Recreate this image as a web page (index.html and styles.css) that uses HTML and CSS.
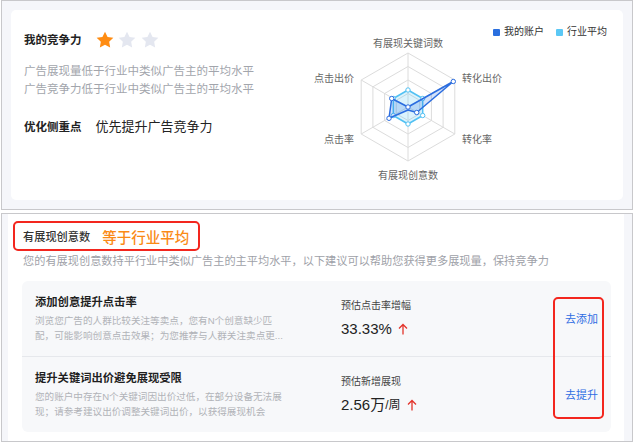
FILE: index.html
```html
<!DOCTYPE html>
<html lang="zh-CN">
<head>
    <meta charset="UTF-8">
    <title>竞争力分析</title>
    <link rel="stylesheet" href="styles.css">
</head>
<body>

<div class="panel panel-top">
    <div class="card compete">
        <div class="info">
            <div class="head">
                <span class="title">我的竞争力</span>
                <span class="stars">
                    <svg class="star on" viewBox="0 0 24 24"><polygon points="12 2 15.09 8.26 22 9.27 17 14.14 18.18 21.02 12 17.77 5.82 21.02 7 14.14 2 9.27 8.91 8.26"/></svg>
                    <svg class="star" viewBox="0 0 24 24"><polygon points="12 2 15.09 8.26 22 9.27 17 14.14 18.18 21.02 12 17.77 5.82 21.02 7 14.14 2 9.27 8.91 8.26"/></svg>
                    <svg class="star" viewBox="0 0 24 24"><polygon points="12 2 15.09 8.26 22 9.27 17 14.14 18.18 21.02 12 17.77 5.82 21.02 7 14.14 2 9.27 8.91 8.26"/></svg>
                </span>
            </div>
            <p class="desc">广告展现量低于行业中类似广告主的平均水平<br>广告竞争力低于行业中类似广告主的平均水平</p>
            <div class="focus">
                <span class="focus-label">优化侧重点</span>
                <span class="focus-value">优先提升广告竞争力</span>
            </div>
        </div>

        <svg class="radar" viewBox="300 30 190 155" width="190" height="155">
            <g class="grid">
                <polygon points="408,53 454.8,80 454.8,134 408,161 361.2,134 361.2,80"/>
                <polygon points="408,66.5 443.1,86.8 443.1,127.3 408,147.5 372.9,127.3 372.9,86.8"/>
                <polygon points="408,80 431.4,93.5 431.4,120.5 408,134 384.6,120.5 384.6,93.5"/>
                <polygon points="408,93.5 419.7,100.3 419.7,113.8 408,120.5 396.3,113.8 396.3,100.3"/>
                <path d="M408 107V53M408 107L454.8 80M408 107L454.8 134M408 107V161M408 107L361.2 134M408 107L361.2 80"/>
            </g>
            <g class="series avg">
                <polygon points="408,90 422.7,98.5 422.7,115.5 408,124 393.3,115.5 393.3,98.5"/>
                <circle cx="408" cy="90" r="2.2"/><circle cx="422.7" cy="98.5" r="2.2"/>
                <circle cx="422.7" cy="115.5" r="2.2"/><circle cx="408" cy="124" r="2.2"/>
                <circle cx="393.3" cy="115.5" r="2.2"/><circle cx="393.3" cy="98.5" r="2.2"/>
            </g>
            <g class="series mine">
                <polygon points="408,107 453.3,81.5 416.7,112.5 408,110 389,118.3 391.7,98.5"/>
                <circle cx="408" cy="107" r="2.2"/><circle cx="453.3" cy="81.5" r="2.2"/>
                <circle cx="416.7" cy="112.5" r="2.2"/><circle cx="389" cy="118.3" r="2.2"/>
                <circle cx="391.7" cy="98.5" r="2.2"/>
            </g>
            <g class="axis">
                <text x="408" y="43" text-anchor="middle">有展现关键词数</text>
                <text x="462" y="78">转化出价</text>
                <text x="462" y="139">转化率</text>
                <text x="408" y="175" text-anchor="middle">有展现创意数</text>
                <text x="354" y="139" text-anchor="end">点击率</text>
                <text x="354" y="78" text-anchor="end">点击出价</text>
            </g>
        </svg>

        <div class="legend">
            <span class="legend-item"><i class="dot dot-mine"></i>我的账户</span>
            <span class="legend-item"><i class="dot dot-avg"></i>行业平均</span>
        </div>
    </div>
</div>

<div class="panel panel-bottom">
    <div class="card advice">
        <div class="metric-head">
            <span class="metric-name">有展现创意数</span>
            <span class="metric-level">等于行业平均</span>
        </div>
        <p class="summary">您的有展现创意数持平行业中类似广告主的主平均水平，以下建议可以帮助您获得更多展现量，保持竞争力</p>

        <div class="suggestions">
            <div class="item">
                <div class="item-main">
                    <div class="item-title">添加创意提升点击率</div>
                    <p class="item-desc">浏览您广告的人群比较关注等卖点，您有N个创意缺少匹配，可能影响创意点击效果；为您推荐与人群关注卖点更...</p>
                </div>
                <div class="estimate">
                    <div class="est-label">预估点击率增幅</div>
                    <div class="est-value">33.33%
                        <svg class="up" viewBox="0 0 10 12"><path d="M5 1.5V11.5M1 5.5L5 1.5L9 5.5"/></svg>
                    </div>
                </div>
                <a class="action">去添加</a>
            </div>
            <div class="item">
                <div class="item-main">
                    <div class="item-title">提升关键词出价避免展现受限</div>
                    <p class="item-desc">您的账户中存在N个关键词因出价过低，在部分设备无法展现；请参考建议出价调整关键词出价，以获得展现机会</p>
                </div>
                <div class="estimate">
                    <div class="est-label">预估新增展现</div>
                    <div class="est-value">2.56万<small>/周</small>
                        <svg class="up" viewBox="0 0 10 12"><path d="M5 1.5V11.5M1 5.5L5 1.5L9 5.5"/></svg>
                    </div>
                </div>
                <a class="action">去提升</a>
            </div>
            <div class="mark"></div>
        </div>
    </div>
</div>

</body>
</html>
```

FILE: styles.css
```css
body { margin: 0; background: #fff; font-family: "Liberation Sans", "Noto Sans CJK SC", sans-serif; color: #222; }
p { margin: 0; }

.panel { width: 632px; margin-left: 1px; box-sizing: border-box; border: 1px solid #c8c8cb; background: #f5f6fa; }
.panel-top { height: 210px; padding: 9px; }
.panel-bottom { height: 229px; margin-top: 3px; padding: 0 8px 0 6px; }
.card { background: #fff; box-sizing: border-box; }

/* top: competitiveness */
.compete { height: 190px; border-radius: 5px; display: flex; align-items: flex-start; padding: 16px 16px 0 13px; }
.info { width: 276px; margin-top: 4px; }
.head { display: flex; align-items: center; height: 20px; }
.title { font-size: 11.5px; font-weight: bold; line-height: 20px; }
.stars { display: flex; gap: 2.5px; margin-left: 13px; }
.star { width: 20px; height: 20px; fill: #e4e7f0; }
.star.on { fill: #ff8c12; }
.desc { margin-top: 12px; font-size: 11.5px; line-height: 18px; color: #a2a5ac; }
.focus { display: flex; align-items: center; gap: 14px; margin-top: 19px; line-height: 20px; }
.focus-label { font-size: 11.5px; font-weight: bold; }
.focus-value { font-size: 13px; color: #222; }

.radar { margin-top: 4px; overflow: visible; }
.grid polygon, .grid path { fill: none; stroke: #dcdcdc; stroke-width: 1; }
.series polygon { stroke-width: 1.5; stroke-linejoin: round; }
.series circle { fill: #fff; stroke-width: 1; }
.avg polygon { fill: rgba(91, 200, 245, 0.22); stroke: #52c1f3; }
.avg circle { stroke: #52c1f3; }
.mine polygon { fill: rgba(42, 111, 223, 0.2); stroke: #2b6de0; }
.mine circle { stroke: #2b6de0; }
.axis text { font-size: 10px; fill: #666; dominant-baseline: central; }

.legend { margin-left: auto; margin-top: -1px; display: flex; gap: 12px; font-size: 10px; line-height: 14px; color: #333; }
.legend-item { display: flex; align-items: center; gap: 4px; }
.dot { width: 7px; height: 7px; border-radius: 1px; }
.dot-mine { background: #2a6fdf; }
.dot-avg { background: #5bc8f5; }

/* bottom: advice */
.advice { height: 227px; overflow: hidden; padding-top: 7px; }
.metric-head { display: flex; align-items: center; gap: 12px; width: fit-content; height: 30px; box-sizing: border-box; margin-left: 5px; padding: 0 9px 0 8px; border: 2px solid #f3261e; border-radius: 5px; }
.metric-name { font-size: 11.2px; font-weight: 500; color: #333; }
.metric-level { font-size: 14.5px; font-weight: 500; color: #fa8a16; }
.summary { margin: 2px 0 0 15px; font-size: 11.2px; line-height: 16px; color: #9ea1a8; white-space: nowrap; }

.suggestions { position: relative; margin: 12px 13px 0 14px; background: #f7f8fa; border-radius: 6px; }
.item { display: grid; grid-template-columns: 306px 1fr auto; align-items: center; padding: 13px; }
.item + .item { border-top: 1px solid #e6e8ec; }
.item-title { font-size: 11.3px; font-weight: bold; line-height: 16px; color: #1f1f1f; }
.item-desc { width: 252px; margin-top: 4px; font-size: 9.6px; line-height: 14.5px; color: #b1b3b8; }
.est-label { font-size: 10px; line-height: 14px; color: #444; }
.est-value { display: flex; align-items: center; margin-top: 6px; font-size: 15px; line-height: 20px; color: #222; }
.est-value small { font-size: 12px; }
.up { width: 10px; height: 12px; margin-left: 6px; fill: none; stroke: #e3342b; stroke-width: 1.3; }
.action { font-size: 11px; line-height: 16px; color: #2f6de3; cursor: pointer; }

.mark { position: absolute; left: 531px; top: 16px; width: 51px; height: 122px; box-sizing: border-box; border: 2px solid #f3261e; border-radius: 5px; }
```
